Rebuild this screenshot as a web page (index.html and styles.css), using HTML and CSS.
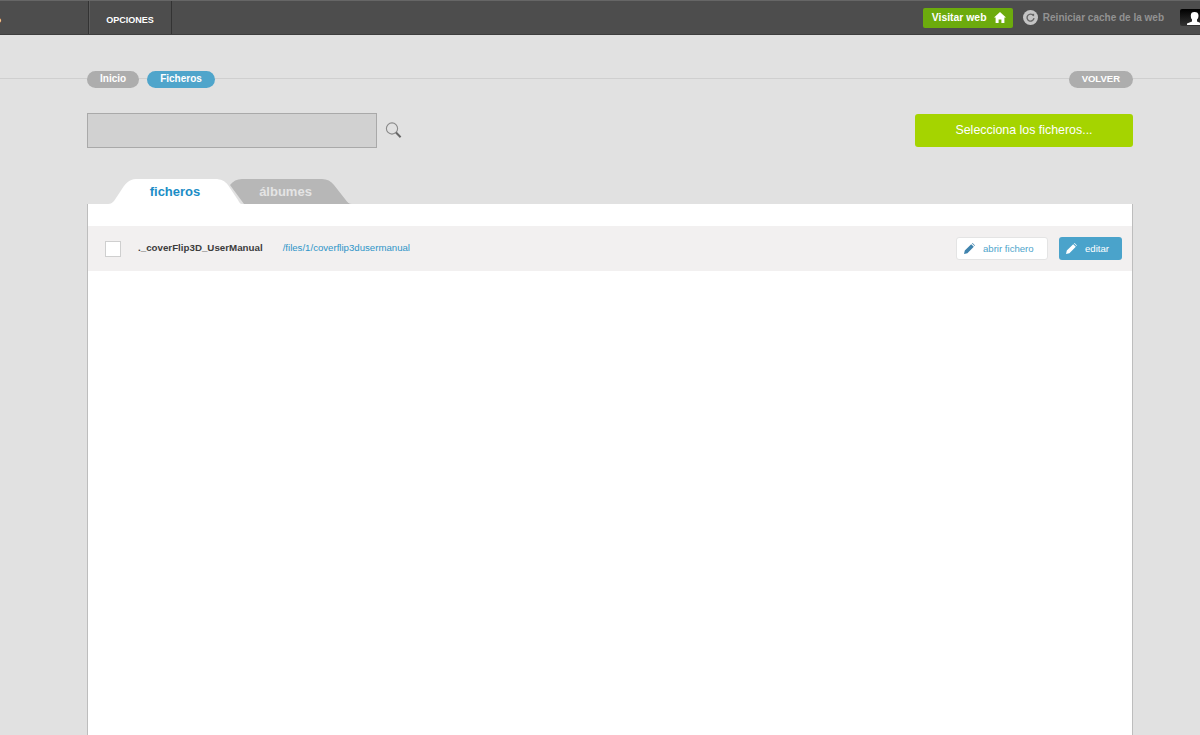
FILE: index.html
```html
<!DOCTYPE html>
<html>
<head>
    <meta charset="utf-8">
    <title>Ficheros</title>
    <link rel="stylesheet" href="styles.css">
</head>
<body>
    <div class="topbar">
        <div class="navitem navcut">Inicio</div>
        <div class="navitem navsel">OPCIONES</div>
        <div class="topright">
            <a class="visitbtn">Visitar web
                <svg class="homeicon" width="12" height="11" viewBox="0 0 12 11"><path d="M6 0 L12 5.6 L10.4 5.6 L10.4 11 L7.4 11 L7.4 7.4 L4.6 7.4 L4.6 11 L1.6 11 L1.6 5.6 L0 5.6 Z" fill="#fff"/></svg>
            </a>
            <svg class="reloadicon" width="15" height="15" viewBox="0 0 15 15"><circle cx="7.5" cy="7.5" r="7.5" fill="#c4c4c4"/><path d="M10.4 5.6 A3.5 3.5 0 1 0 11 8.2" fill="none" stroke="#666" stroke-width="1.4"/><path d="M8.6 4 L11.2 3.8 L11 6.6 Z" fill="#666"/></svg>
            <a class="reloadlink">Reiniciar cache de la web</a>
            <div class="avatar">
                <svg width="20" height="17" viewBox="0 0 20 17"><path d="M7 16 L7 14.5 L12 12.5 L12 10.5 C11 9.5 10.8 8 10.8 6.5 C10.8 4 12 3 14.5 3 C17 3 18.5 4 18.5 6.5 C18.5 8 18.2 9.5 17 10.5 L17 12.5 L20 13.8 L20 16 Z" fill="#fff"/></svg>
            </div>
        </div>
    </div>

    <div class="content">
        <div class="crumbs">
            <a class="pill">Inicio</a>
            <a class="pill pillblue">Ficheros</a>
            <a class="pill pillback">VOLVER</a>
        </div>

        <div class="toolsrow">
            <input class="searchbox" type="text">
            <svg class="searchicon" width="17" height="17" viewBox="0 0 17 17"><circle cx="7" cy="6.5" r="5.6" fill="none" stroke="#8a8a8a" stroke-width="1.1"/><path d="M11 10.5 L15.6 15.2" stroke="#666" stroke-width="2"/></svg>
            <a class="selectbtn">Selecciona los ficheros...</a>
        </div>

        <div class="tabs">
            <div class="tab tabon">
                <svg class="tabshape" width="134" height="25" viewBox="0 0 134 25"><path d="M0 25 C3 25 4 24 6 22 L12 13 C17 5 21 0 28 0 L107 0 C113 0 117 2 120 6 L130 21 C131 23 132 25 134 25 Z" fill="#fff"/></svg>
                <span class="tablabel">ficheros</span>
            </div>
            <div class="tab taboff">
                <svg class="tabshape" width="122" height="25" viewBox="0 0 122 25"><path d="M0 6 C3 2 7 0 12 0 L92 0 C97 0 101 2 104 6 L115 20 C117 23 119 25 122 25 L14 25 Z" fill="#b7b7b7"/></svg>
                <span class="tablabel">álbumes</span>
            </div>
        </div>

        <div class="panel">
            <div class="filerow">
                <span class="check"></span>
                <span class="filename">._coverFlip3D_UserManual</span>
                <a class="filepath">/files/1/coverflip3dusermanual</a>
                <a class="rowbtn btnopen">
                    <svg width="11" height="11" viewBox="0 0 11 11"><path d="M0 11 L0.8 7.6 L7.2 1.2 L9.8 3.8 L3.4 10.2 Z M8 0.4 L8.6 0 L11 2.4 L10.6 3 Z" fill="#3f83ad"/></svg>
                    abrir fichero
                </a>
                <a class="rowbtn btnedit">
                    <svg width="11" height="11" viewBox="0 0 11 11"><path d="M0 11 L0.8 7.6 L7.2 1.2 L9.8 3.8 L3.4 10.2 Z M8 0.4 L8.6 0 L11 2.4 L10.6 3 Z" fill="#fff"/></svg>
                    editar
                </a>
            </div>
        </div>
    </div>
</body>
</html>
```

FILE: styles.css
```css
* {
    margin: 0px;
    box-sizing: border-box;
}

html, body {
    height: 100%;
    overflow: hidden;
}

body {
    background: #e1e1e1;
    font-family: "Liberation Sans", Arial, sans-serif;
    display: flex;
    flex-direction: column;
}

.topbar {
    height: 35px;
    flex: none;
    display: flex;
    background: #4d4d4d;
    border-top: 1px solid #666;
    border-bottom: 1px solid #3e3e3e;
}

.navitem {
    font-size: 9px;
    font-weight: bold;
    color: #fff;
    line-height: 39px;
    height: 33px;
}

.navcut {
    width: 88px;
    overflow: hidden;
    direction: rtl;
    padding-right: 87px;
    white-space: nowrap;
}

.navsel {
    width: 84px;
    text-align: center;
    border-left: 1px solid #333;
    border-right: 1px solid #333;
    box-shadow: inset 1px 0 0 #5c5c5c;
}

.topright {
    margin-left: auto;
    display: flex;
    align-items: center;
}

.visitbtn {
    width: 90px;
    height: 20px;
    background: #6cab0d;
    border-radius: 2px;
    color: #fff;
    font-size: 10.4px;
    font-weight: bold;
    display: flex;
    align-items: center;
    padding-left: 9px;
}

.homeicon {
    margin-left: auto;
    margin-right: 7px;
}

.reloadicon {
    margin-left: 10px;
}

.reloadlink {
    margin-left: 5px;
    font-size: 10px;
    font-weight: bold;
    color: #929292;
    white-space: nowrap;
}

.avatar {
    width: 20px;
    height: 17px;
    margin-left: 16px;
    background: linear-gradient(#000, #333);
    border-radius: 2px 0 0 2px;
    display: flex;
}

.content {
    flex: 1;
    display: flex;
    flex-direction: column;
    min-height: 0;
}

.crumbs {
    height: 17px;
    margin-top: 36px;
    padding: 0 67px 0 87px;
    display: flex;
    gap: 8px;
    background: linear-gradient(#cfcfcf, #cfcfcf) no-repeat 0 7px / 100% 1px;
}

.pill {
    height: 17px;
    line-height: 16px;
    padding: 0 13px;
    border-radius: 9px;
    background: #adadad;
    color: #fff;
    font-size: 10px;
    font-weight: bold;
}

.pillblue {
    background: #4fa5cb;
}

.pillback {
    margin-left: auto;
    font-size: 9.5px;
}

.toolsrow {
    margin: 25px 67px 0 87px;
    height: 35px;
    display: flex;
    align-items: center;
}

.searchbox {
    width: 290px;
    height: 35px;
    background: #d1d1d1;
    border: 1px solid #a9a9a9;
}

.searchicon {
    margin-left: 8px;
}

.selectbtn {
    margin-left: auto;
    width: 218px;
    height: 33px;
    line-height: 33px;
    text-align: center;
    background: #a5d400;
    border-radius: 3px;
    color: #fff;
    font-size: 12.4px;
}

.tabs {
    margin: 31px 0 0 108px;
    height: 25px;
    display: flex;
}

.tab {
    position: relative;
    height: 25px;
    font-size: 13px;
    font-weight: bold;
    text-align: center;
    line-height: 26px;
}

.tabshape {
    position: absolute;
    top: 0;
    left: 0;
}

.tablabel {
    position: relative;
}

.tabon {
    width: 134px;
    color: #1b8dc6;
    z-index: 1;
}

.taboff {
    width: 122px;
    margin-left: -12px;
    padding-right: 11px;
    color: #e4e4e4;
}

.panel {
    flex: 1;
    margin: 0 67px 0 87px;
    padding-top: 22px;
    background: #fff;
    border: 1px solid #bdbdbd;
    border-width: 0 1px;
}

.filerow {
    height: 45px;
    background: #f2f0f0;
    display: flex;
    align-items: center;
    padding: 0 10px 0 17px;
}

.check {
    width: 16px;
    height: 16px;
    background: #fff;
    border: 1px solid #cfcfcf;
    margin-top: 1px;
}

.filename {
    margin-left: 17px;
    font-size: 9.75px;
    font-weight: bold;
    color: #3c3c3c;
    margin-top: -3px;
}

.filepath {
    margin-left: 20px;
    font-size: 9.65px;
    color: #2f95c8;
    margin-top: -3px;
}

.rowbtn {
    height: 23px;
    border-radius: 3px;
    font-size: 9.6px;
    display: flex;
    align-items: center;
    gap: 8px;
    padding-left: 7px;
}

.btnopen {
    margin-left: auto;
    width: 92px;
    background: #fff;
    border: 1px solid #e4e4e4;
    color: #4fa5cb;
}

.btnedit {
    margin-left: 11px;
    width: 63px;
    background: #4aa3cb;
    color: #fff;
}
```
